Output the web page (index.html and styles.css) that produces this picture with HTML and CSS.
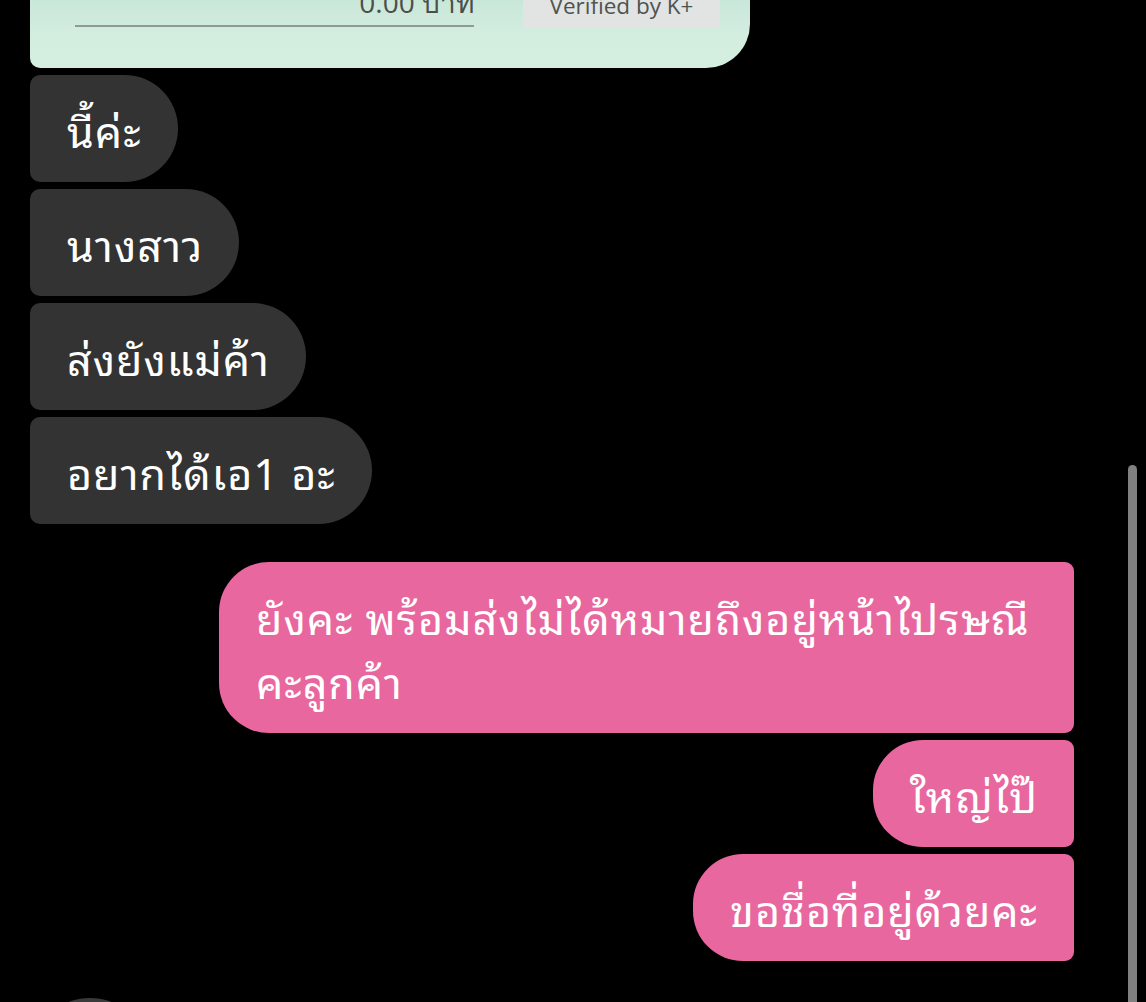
FILE: index.html
```html
<!DOCTYPE html>
<html lang="th">
<head>
<meta charset="utf-8">
<title>Chat</title>
<link rel="stylesheet" href="styles.css">
</head>
<body>
<div class="screen">
  <div class="chat">
    <div class="slip">
      <div class="slip-row">
        <div class="amount-col">
          <div class="amount">0.00 บาท</div>
          <div class="amount-line"></div>
        </div>
        <div class="verified">Verified by K+</div>
      </div>
    </div>

    <div class="msg in">นี้ค่ะ</div>
    <div class="msg in">นางสาว</div>
    <div class="msg in">ส่งยังแม่ค้า</div>
    <div class="msg in">อยากได้เอ1 อะ</div>

    <div class="msg out first">ยังคะ พร้อมส่งไม่ได้หมายถึงอยู่หน้าไปรษณี คะลูกค้า</div>
    <div class="msg out">ใหญ่ไป๊</div>
    <div class="msg out">ขอชื่อที่อยู่ด้วยคะ</div>

    <div class="avatar-peek"></div>
  </div>
  <div class="scrollbar"></div>
</div>
</body>
</html>
```

FILE: styles.css
```css
html, body {
  margin: 0;
  padding: 0;
  background: #000;
  height: 1002px;
  overflow: hidden;
}

.screen {
  position: relative;
  width: 1146px;
  height: 1002px;
  overflow: hidden;
  font-family: "Noto Sans Thai Looped", "Noto Sans Thai", "Noto Sans", "DejaVu Sans", sans-serif;
}

.chat {
  display: flex;
  flex-direction: column;
  gap: 7px;
  padding: 0 72px 0 30px;
}

.slip {
  width: 720px;
  height: 68px;
  background: linear-gradient(#c9e7d9, #d3eddf 50%, #d4eee0);
  border-radius: 0 0 44px 10px;
  padding-left: 45px;
  box-sizing: border-box;
  overflow: hidden;
}

.slip-row {
  display: flex;
  align-items: flex-start;
  gap: 49px;
}

.amount-col {
  width: 399px;
  display: flex;
  flex-direction: column;
}

.amount {
  font-family: "Open Sans", "Noto Sans", sans-serif;
  font-size: 28px;
  line-height: 28px;
  height: 28px;
  margin-top: -12px;
  margin-bottom: 9px;
  color: #4a4f4c;
  text-align: right;
}

.amount-line {
  height: 2px;
  background: #8e9c95;
}

.verified {
  width: 197px;
  height: 28px;
  background: #e1e4e2;
  color: #4f5350;
  font-family: "Open Sans", "Noto Sans", sans-serif;
  font-size: 22.5px;
  line-height: 12px;
  text-align: center;
}

.msg {
  font-size: 43px;
  letter-spacing: 1px;
  line-height: 64px;
  color: #fff;
  padding: 21.5px 36px 21.5px 37px;
  box-sizing: border-box;
  max-width: 855px;
}

.msg.in {
  align-self: flex-start;
  background: #333333;
  border-radius: 10px 54px 54px 10px;
}

.msg.out {
  align-self: flex-end;
  background: #e8679e;
  border-radius: 50px 9px 9px 50px;
}

.msg.out.first {
  margin-top: 31px;
  width: 855px;
}

.avatar-peek {
  margin: 30px 0 0 34px;
  width: 52px;
  height: 40px;
  background: #3a3a3a;
  border-radius: 50% 50% 0 0 / 24% 24% 0 0;
}

.scrollbar {
  position: absolute;
  left: 1128px;
  top: 465px;
  width: 9px;
  height: 560px;
  background: #808080;
  border-radius: 5px 5px 0 0;
}
```
